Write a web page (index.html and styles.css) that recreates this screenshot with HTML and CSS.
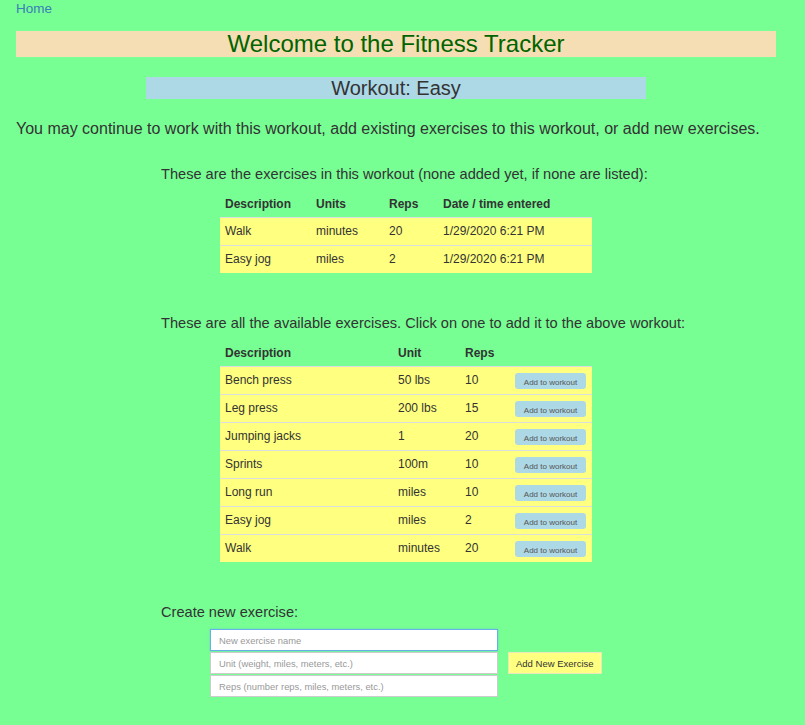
FILE: index.html
```html
<!DOCTYPE html>
<html>
<head>
<meta charset="utf-8">
<title>Fitness Tracker</title>
<link rel="stylesheet" href="styles.css">
</head>
<body>
<nav class="nav"><a href="#" class="home">Home</a></nav>
<h1 class="title">Welcome to the Fitness Tracker</h1>
<h2 class="workout">Workout: Easy</h2>
<p class="intro">You may continue to work with this workout, add existing exercises to this workout, or add new exercises.</p>

<section class="block">
  <p class="lead">These are the exercises in this workout (none added yet, if none are listed):</p>
  <table class="tbl tbl-workout">
    <thead>
      <tr><th class="c1">Description</th><th class="c2">Units</th><th class="c3">Reps</th><th>Date / time entered</th></tr>
    </thead>
    <tbody>
      <tr><td>Walk</td><td>minutes</td><td>20</td><td>1/29/2020 6:21 PM</td></tr>
      <tr><td>Easy jog</td><td>miles</td><td>2</td><td>1/29/2020 6:21 PM</td></tr>
    </tbody>
  </table>
</section>

<section class="block block2">
  <p class="lead">These are all the available exercises. Click on one to add it to the above workout:</p>
  <table class="tbl tbl-all">
    <thead>
      <tr><th class="d1">Description</th><th class="d2">Unit</th><th class="d3">Reps</th><th></th></tr>
    </thead>
    <tbody>
      <tr><td>Bench press</td><td>50 lbs</td><td>10</td><td><button class="add">Add to workout</button></td></tr>
      <tr><td>Leg press</td><td>200 lbs</td><td>15</td><td><button class="add">Add to workout</button></td></tr>
      <tr><td>Jumping jacks</td><td>1</td><td>20</td><td><button class="add">Add to workout</button></td></tr>
      <tr><td>Sprints</td><td>100m</td><td>10</td><td><button class="add">Add to workout</button></td></tr>
      <tr><td>Long run</td><td>miles</td><td>10</td><td><button class="add">Add to workout</button></td></tr>
      <tr><td>Easy jog</td><td>miles</td><td>2</td><td><button class="add">Add to workout</button></td></tr>
      <tr><td>Walk</td><td>minutes</td><td>20</td><td><button class="add">Add to workout</button></td></tr>
    </tbody>
  </table>
</section>

<section class="block block3">
  <p class="lead">Create new exercise:</p>
  <form class="newform">
    <div class="fields">
      <input class="field focus" type="text" placeholder="New exercise name">
      <input class="field" type="text" placeholder="Unit (weight, miles, meters, etc.)">
      <input class="field" type="text" placeholder="Reps (number reps, miles, meters, etc.)">
    </div>
    <button type="button" class="addnew">Add New Exercise</button>
  </form>
</section>
</body>
</html>
```
FILE: styles.css
```css
html, body {
  margin: 0;
  padding: 0;
}
body {
  background: #77ff94;
  font-family: "Liberation Sans", Arial, sans-serif;
  color: #333;
  font-size: 14px;
}
.nav {
  padding-left: 16px;
  height: 17px;
  line-height: 16px;
}
.home {
  color: #3a7fb8;
  text-decoration: none;
  font-size: 13.5px;
}
.title {
  margin: 14px 29px 0 16px;
  height: 26px;
  line-height: 26px;
  background: #f5deb3;
  color: #006400;
  font-size: 24px;
  font-weight: normal;
  text-align: center;
}
.workout {
  margin: 20px 0 0 146px;
  width: 500px;
  height: 22px;
  line-height: 23px;
  background: #add8e6;
  color: #333;
  font-size: 20px;
  font-weight: normal;
  text-align: center;
}
.intro {
  margin: 20px 0 0 16px;
  font-size: 16px;
  line-height: 20px;
}
.block {
  margin-left: 161px;
}
.lead {
  margin: 25px 0 0 0;
  font-size: 14.6px;
  line-height: 20px;
}
.block2 .lead {
  margin-top: 40px;
}
.block3 .lead {
  margin-top: 40px;
}
.tbl {
  margin: 8px 0 0 59px;
  width: 372px;
  border-collapse: collapse;
  font-size: 12px;
}
.tbl th {
  text-align: left;
  font-weight: bold;
  padding: 5px 5px 5px 5px;
  line-height: 15px;
  height: 15px;
}
.tbl td {
  background: #ffff80;
  border-top: 1px solid #dddddd;
  padding: 5px;
  line-height: 17px;
  height: 17px;
}
.tbl-workout th.c1 { width: 81px; }
.tbl-workout th.c2 { width: 63px; }
.tbl-workout th.c3 { width: 44px; }
.tbl-all th.d1 { width: 163px; }
.tbl-all th.d2 { width: 57px; }
.tbl-all th.d3 { width: 40px; }
.add {
  display: block;
  width: 71px;
  height: 16px;
  padding: 3px 0 0 0;
  border: none;
  border-radius: 3px;
  background: #add8e6;
  color: #555;
  font-family: "Liberation Sans", Arial, sans-serif;
  font-size: 8px;
  line-height: 13px;
  text-align: center;
}
.newform {
  margin: 7px 0 0 49px;
  display: flex;
  align-items: center;
  gap: 10px;
}
.fields {
  display: flex;
  flex-direction: column;
  gap: 1px;
  width: 288px;
}
.field {
  box-sizing: border-box;
  width: 288px;
  height: 22px;
  margin: 0;
  padding: 0 8px;
  border: 1px solid #cccccc;
  background: #fff;
  font-family: "Liberation Sans", Arial, sans-serif;
  font-size: 9.4px;
  color: #555;
  outline: none;
}
.field::placeholder {
  color: #999;
}
.field.focus {
  border-color: #66afe9;
  box-shadow: 0 0 2px rgba(102, 175, 233, 0.6);
}
.addnew {
  height: 22px;
  padding: 0 7px;
  border: 1px solid #e8e8c0;
  background: #ffff80;
  color: #333;
  font-family: "Liberation Sans", Arial, sans-serif;
  font-size: 9.5px;
}
```
